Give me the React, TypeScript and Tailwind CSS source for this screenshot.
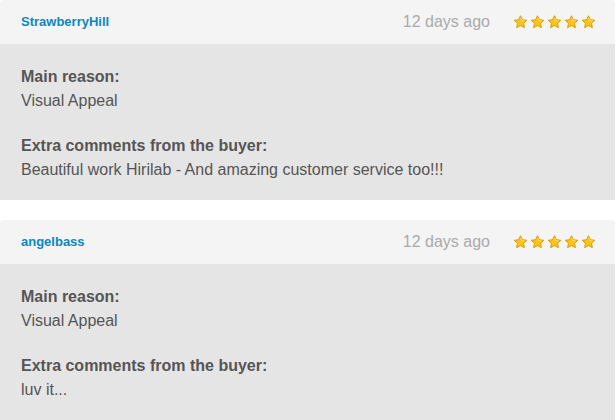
const reviews = [
  {
    user: "StrawberryHill",
    when: "12 days ago",
    reason: "Visual Appeal",
    comment: "Beautiful work Hirilab - And amazing customer service too!!!",
  },
  {
    user: "angelbass",
    when: "12 days ago",
    reason: "Visual Appeal",
    comment: "luv it...",
  },
];

function Star() {
  return (
    <svg width="15" height="14" viewBox="0 0 24 23">
      <path
        d="M12 1.2l3.1 6.6 7.2.9-5.3 5 1.4 7.1L12 17.3l-6.4 3.5 1.4-7.1-5.3-5 7.2-.9z"
        fill="#fcc419"
        stroke="#d89b00"
        strokeWidth="1.6"
        strokeLinejoin="round"
      />
      <path d="M12 4.5l2.2 4.6 5 .6" fill="none" stroke="#ffe58a" strokeWidth="1.2" />
    </svg>
  );
}

function ReviewCard({ user, when, reason, comment }: (typeof reviews)[number]) {
  return (
    <div className="mr-px rounded-t-[4px] overflow-hidden">
      <div className="h-[44px] bg-[#f4f4f4] flex items-center pl-[21px] pr-[19px]">
        <span className="text-[13px] font-bold text-[#0f86bb]">{user}</span>
        <span className="ml-auto text-[16px] text-[#aaaaaa]">{when}</span>
        <div className="ml-[23px] flex gap-[2px]">
          {[0, 1, 2, 3, 4].map((i) => (
            <Star key={i} />
          ))}
        </div>
      </div>
      <div className="bg-[#e5e5e5] pl-[21px] pr-4 pt-[21px] pb-[18px] text-[16px] leading-[24px] text-[#555555]">
        <div className="font-bold">Main reason:</div>
        <div>{reason}</div>
        <div className="font-bold mt-[21px]">Extra comments from the buyer:</div>
        <div>{comment}</div>
      </div>
    </div>
  );
}

export default function App() {
  return (
    <div className="w-[616px] h-[420px] overflow-hidden bg-white flex flex-col gap-[20px]" style={{ fontFamily: '"Liberation Sans", Arial, sans-serif' }}>
      {reviews.map((r) => (
        <ReviewCard key={r.user} {...r} />
      ))}
    </div>
  );
}
